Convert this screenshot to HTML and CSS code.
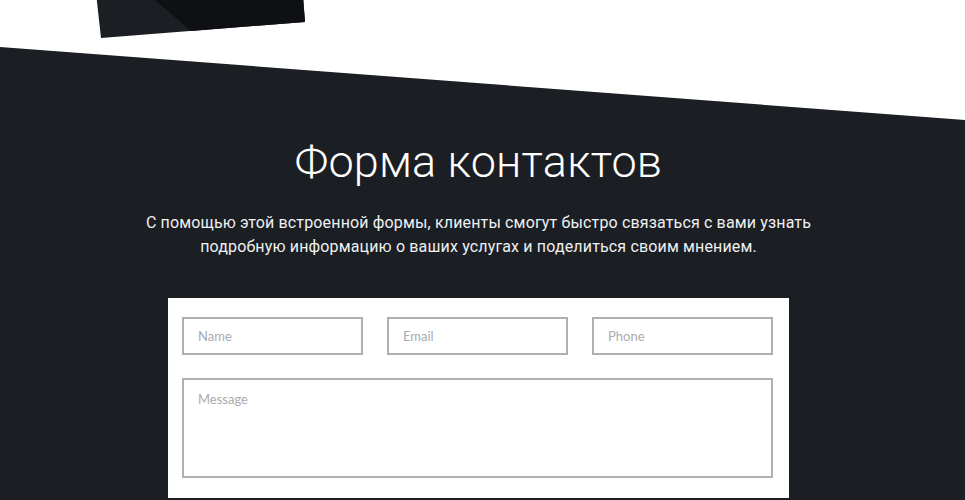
FILE: index.html
```html
<!DOCTYPE html>
<html lang="ru">
<head>
  <meta charset="UTF-8" />
  <meta name="viewport" content="width=device-width, initial-scale=1" />
  <title>Форма контактов</title>
  <link rel="stylesheet" href="styles.css">
</head>
<body>
  <div class="intro">
    <svg class="intro-shape" width="965" height="47" viewBox="0 0 965 47">
      <polygon points="96.8,0 101,38 305,22 303.3,0" fill="#1b1e22" />
      <polygon points="155,0 191,31 305,22 303.3,0" fill="#0f1013" />
    </svg>
  </div>

  <section class="contacts">
    <h1>Форма контактов</h1>
    <p class="lead">С помощью этой встроенной формы, клиенты смогут быстро связаться с вами узнать<br/>подробную информацию о ваших услугах и поделиться своим мнением.</p>

    <form class="contact-form">
      <div class="row">
        <input type="text" placeholder="Name" />
        <input type="text" placeholder="Email" />
        <input type="text" placeholder="Phone" />
      </div>
      <textarea placeholder="Message"></textarea>
    </form>
  </section>
</body>
</html>
```

FILE: styles.css
```css
body {
  margin: 0;
  background: #fff;
  font-family: Roboto, 'Noto Sans', sans-serif;
  overflow: hidden;
}

.intro {
  height: 47px;
}

.intro-shape {
  display: block;
}

.contacts {
  background: #1b1e22;
  clip-path: polygon(0 0, 100% 73px, 100% 100%, 0 100%);
  padding: 88px 8px 40px 0;
  text-align: center;
  color: #fff;
  min-height: 500px;
}

.contacts h1 {
  margin: 0;
  font-weight: 300;
  font-size: 45px;
  line-height: 54px;
  letter-spacing: 0.2px;
}

.lead {
  margin: 22px 0 0;
  font-size: 16px;
  line-height: 24px;
  color: #eef0f2;
  letter-spacing: 0.15px;
}

.contact-form {
  width: 591px;
  margin: 39px auto 0;
  background: #fff;
  padding: 19px 16px 20px 14px;
}

.row {
  display: flex;
  gap: 24px;
  margin-bottom: 23px;
}

input[type="text"],
textarea {
  box-sizing: border-box;
  border: 2px solid #b0b0b0;
  font-family: Lato, 'Open Sans', sans-serif;
  font-size: 13px;
  color: #555;
  padding: 0 14px;
  outline: none;
}

input[type="text"] {
  flex: 1;
  height: 38px;
  min-width: 0;
}

textarea {
  display: block;
  width: 100%;
  height: 100px;
  padding-top: 11px;
  resize: none;
}

::placeholder {
  color: #a9abb0;
}
```
